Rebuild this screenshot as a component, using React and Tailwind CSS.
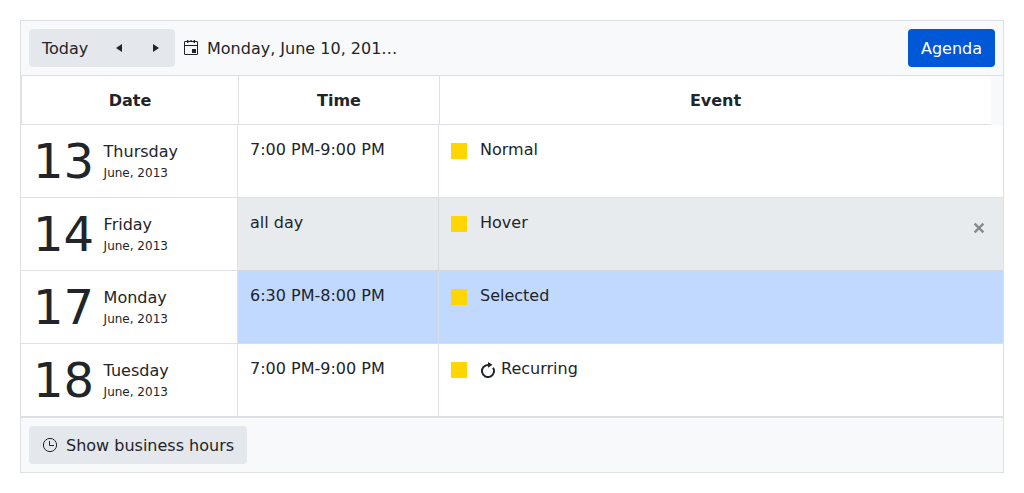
import React from "react";

const EVENTS = [
  { day: 13, weekday: "Thursday", time: "7:00 PM-9:00 PM", title: "Normal" },
  { day: 14, weekday: "Friday", time: "all day", title: "Hover", state: "hover" },
  { day: 17, weekday: "Monday", time: "6:30 PM-8:00 PM", title: "Selected", state: "selected" },
  { day: 18, weekday: "Tuesday", time: "7:00 PM-9:00 PM", title: "Recurring", recurring: true },
];

const ROW_STYLE = {
  hover: "bg-[#e7ebee] border-[#d5d9dd]",
  selected: "bg-[#c2d9ff] border-[#d9dce1]",
};

function CalendarIcon() {
  return (
    <svg className="block h-4 w-4" viewBox="0 0 16 16" fill="none">
      <rect x="1.5" y="1.5" width="13" height="13" rx="0.3" stroke="currentColor" />
      <path d="M1 5.5h14" stroke="currentColor" />
      <path d="M4 0h1.4v3H4zM10.6 0H12v3h-1.4zM7.3 0h1.4v1.5H7.3zM9 9h4v4H9z" fill="currentColor" />
    </svg>
  );
}

function ClockIcon() {
  return (
    <svg className="block h-4 w-4" viewBox="0 0 16 16" fill="none" stroke="currentColor">
      <circle cx="8" cy="8" r="6.6" />
      <path d="M7.5 4v4.5H12" />
    </svg>
  );
}

function RecurIcon() {
  return (
    <svg className="block h-4 w-4 shrink-0" viewBox="0 0 16 16" fill="none">
      <path d="M9.5 3H8a6 6 0 1 0 5 2.7" stroke="currentColor" strokeWidth="2" />
      <path d="M8 0l4.5 2.8L8 5.8z" fill="currentColor" />
    </svg>
  );
}

function CloseIcon() {
  return (
    <svg className="block h-4 w-4" viewBox="0 0 16 16" fill="none" stroke="currentColor" strokeWidth="2.3">
      <path d="M3.6 3.6l8.8 8.8M12.4 3.6l-8.8 8.8" />
    </svg>
  );
}

function Toolbar() {
  return (
    <div className="flex h-[55px] items-center border-b border-[#dee0e6] bg-[#f8f9fb] px-2">
      <div className="flex h-[38px] w-[146px] items-center rounded bg-[#e4e7eb]">
        <button className="w-[71px] pl-[13px] pt-px text-left">Today</button>
        <button className="flex w-[37px] justify-center">
          <svg className="block h-2 w-1.5" viewBox="0 0 6 8" fill="currentColor"><path d="M6 0v8L0 4z" /></svg>
        </button>
        <button className="flex w-[37px] justify-center">
          <svg className="block h-2 w-1.5" viewBox="0 0 6 8" fill="currentColor"><path d="M0 0v8l6-4z" /></svg>
        </button>
      </div>
      <div className="ml-2 flex items-center gap-2">
        <CalendarIcon />
        <span className="pt-0.5">Monday, June 10, 201…</span>
      </div>
      <button className="ml-auto h-[38px] w-[87px] rounded bg-[#0058d6] pt-0.5 text-white">Agenda</button>
    </div>
  );
}

function HeaderRow() {
  return (
    <div className="flex h-[49px] bg-[#f8f9fb] pr-3 font-bold">
      <div className="flex w-[217px] items-center justify-center border-b border-l border-[#dee0e6] bg-white pt-0.5">Date</div>
      <div className="flex w-[201px] items-center justify-center border-b border-l border-[#dee0e6] bg-white pt-0.5">Time</div>
      <div className="flex flex-1 items-center justify-center border-b border-l border-[#dee0e6] bg-white pt-0.5">Event</div>
    </div>
  );
}

function EventRow({ day, weekday, time, title, state, recurring }) {
  const style = ROW_STYLE[state] || "bg-white border-[#dee0e6]";
  return (
    <div className="flex h-[73px]">
      <div className="flex w-[217px] border-b border-r border-[#dee0e6] pl-3">
        <div className="w-[70.6px] pt-3 text-[48px] leading-[48px]">{day}</div>
        <div className="pt-[15px]">
          <div className="leading-6">{weekday}</div>
          <div className="text-xs leading-[18px]">June, 2013</div>
        </div>
      </div>
      <div className={`w-[201px] border-b border-r px-3 pt-[13px] ${style}`}>{time}</div>
      <div className={`flex flex-1 border-b pl-3 pr-4 pt-[13px] ${style}`}>
        <span className="mt-[5px] h-4 w-4 shrink-0 bg-[#ffd600]" />
        <div className="ml-[13px] flex">
          {recurring && (
            <span className="mr-[5px] mt-[5px]">
              <RecurIcon />
            </span>
          )}
          <span>{title}</span>
        </div>
        {state === "hover" && (
          <button className="ml-auto mt-[9px] h-4 w-4 text-[#86898c]">
            <CloseIcon />
          </button>
        )}
      </div>
    </div>
  );
}

export default function App() {
  return (
    <div className="h-[493px] bg-white p-5 font-['DejaVu_Sans',sans-serif] text-base text-[#212529]">
      <div className="border border-[#dee0e6]">
        <Toolbar />
        <HeaderRow />
        {EVENTS.map((event) => (
          <EventRow key={event.day} {...event} />
        ))}
        <div className="flex h-[55px] items-center border-t border-[#dee0e6] bg-[#f8f9fb] px-2">
          <button className="flex h-[38px] w-[218px] items-center gap-2 rounded bg-[#e4e7eb] pl-[13px]">
            <ClockIcon />
            <span className="pt-0.5">Show business hours</span>
          </button>
        </div>
      </div>
    </div>
  );
}
